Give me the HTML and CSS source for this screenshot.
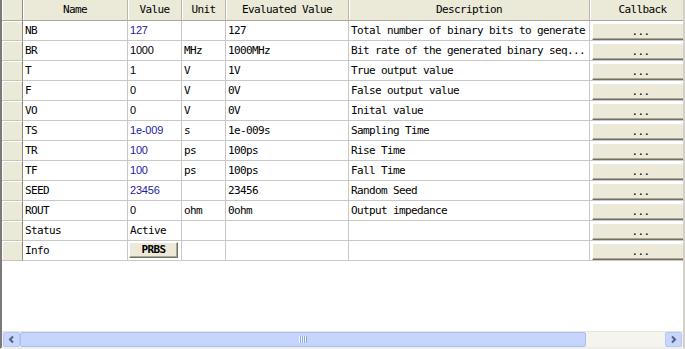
FILE: index.html
```html
<!DOCTYPE html>
<html lang="en">
  <head>
    <meta charset="UTF-8" />
    <title>Parameters</title>
    <link rel="stylesheet" href="styles.css">
  </head>
  <body>
    <div class="frame">
      <div class="viewport">
        <div class="sheet">
          <div class="row head">
            <div class="hcell corner"></div>
            <div class="hcell">Name</div>
            <div class="hcell">Value</div>
            <div class="hcell">Unit</div>
            <div class="hcell">Evaluated Value</div>
            <div class="hcell">Description</div>
            <div class="hcell">Callback</div>
          </div>

          <div class="row">
            <div class="rh"></div>
            <div class="cell">NB</div>
            <div class="cell num blue">127</div>
            <div class="cell"></div>
            <div class="cell">127</div>
            <div class="cell">Total number of binary bits to generate</div>
            <div class="cell cb"><button class="dots">...</button></div>
          </div>
          <div class="row">
            <div class="rh"></div>
            <div class="cell">BR</div>
            <div class="cell num">1000</div>
            <div class="cell">MHz</div>
            <div class="cell">1000MHz</div>
            <div class="cell">Bit rate of the generated binary seq...</div>
            <div class="cell cb"><button class="dots">...</button></div>
          </div>
          <div class="row">
            <div class="rh"></div>
            <div class="cell">T</div>
            <div class="cell num">1</div>
            <div class="cell">V</div>
            <div class="cell">1V</div>
            <div class="cell">True output value</div>
            <div class="cell cb"><button class="dots">...</button></div>
          </div>
          <div class="row">
            <div class="rh"></div>
            <div class="cell">F</div>
            <div class="cell num">0</div>
            <div class="cell">V</div>
            <div class="cell">0V</div>
            <div class="cell">False output value</div>
            <div class="cell cb"><button class="dots">...</button></div>
          </div>
          <div class="row">
            <div class="rh"></div>
            <div class="cell">VO</div>
            <div class="cell num">0</div>
            <div class="cell">V</div>
            <div class="cell">0V</div>
            <div class="cell">Inital value</div>
            <div class="cell cb"><button class="dots">...</button></div>
          </div>
          <div class="row">
            <div class="rh"></div>
            <div class="cell">TS</div>
            <div class="cell num blue">1e-009</div>
            <div class="cell">s</div>
            <div class="cell">1e-009s</div>
            <div class="cell">Sampling Time</div>
            <div class="cell cb"><button class="dots">...</button></div>
          </div>
          <div class="row">
            <div class="rh"></div>
            <div class="cell">TR</div>
            <div class="cell num blue">100</div>
            <div class="cell">ps</div>
            <div class="cell">100ps</div>
            <div class="cell">Rise Time</div>
            <div class="cell cb"><button class="dots">...</button></div>
          </div>
          <div class="row">
            <div class="rh"></div>
            <div class="cell">TF</div>
            <div class="cell num blue">100</div>
            <div class="cell">ps</div>
            <div class="cell">100ps</div>
            <div class="cell">Fall Time</div>
            <div class="cell cb"><button class="dots">...</button></div>
          </div>
          <div class="row">
            <div class="rh"></div>
            <div class="cell">SEED</div>
            <div class="cell num blue">23456</div>
            <div class="cell"></div>
            <div class="cell">23456</div>
            <div class="cell">Random Seed</div>
            <div class="cell cb"><button class="dots">...</button></div>
          </div>
          <div class="row">
            <div class="rh"></div>
            <div class="cell">ROUT</div>
            <div class="cell num">0</div>
            <div class="cell">ohm</div>
            <div class="cell">0ohm</div>
            <div class="cell">Output impedance</div>
            <div class="cell cb"><button class="dots">...</button></div>
          </div>
          <div class="row">
            <div class="rh"></div>
            <div class="cell">Status</div>
            <div class="cell">Active</div>
            <div class="cell"></div>
            <div class="cell"></div>
            <div class="cell"></div>
            <div class="cell cb"><button class="dots">...</button></div>
          </div>
          <div class="row">
            <div class="rh"></div>
            <div class="cell">Info</div>
            <div class="cell"><button class="prbs">PRBS</button></div>
            <div class="cell"></div>
            <div class="cell"></div>
            <div class="cell"></div>
            <div class="cell cb"><button class="dots">...</button></div>
          </div>
        </div>
      </div>

      <div class="hscroll">
        <div class="arrow">
          <svg width="9" height="9" viewBox="0 0 9 9"><path d="M6 1.5 L3 4.5 L6 7.5" fill="none" stroke="#4d6185" stroke-width="2"/></svg>
        </div>
        <div class="thumb"><span class="grip"></span></div>
        <div class="track"></div>
        <div class="arrow">
          <svg width="9" height="9" viewBox="0 0 9 9"><path d="M3 1.5 L6 4.5 L3 7.5" fill="none" stroke="#4d6185" stroke-width="2"/></svg>
        </div>
      </div>
    </div>
  </body>
</html>
```

FILE: styles.css
```css
/* Page and outer frame */
body {
  margin: 0;
  background: #ffffff;
  font-family: "DejaVu Sans Mono", "Liberation Mono", monospace;
  font-size: 11px;
  letter-spacing: -0.62px;
  color: #000000;
}

.frame {
  width: 685px;
  height: 349px;
  box-sizing: border-box;
  border-left: 2px solid #7a7a7a;
  border-right: 2px solid #d4d0c8;
  border-bottom: 2px solid #f0efe8;
  display: flex;
  flex-direction: column;
  overflow: hidden;
}

.viewport {
  flex: 1;
  overflow: hidden;
  background: #ffffff;
}

/* Table grid */
.sheet {
  width: 694px;
}

.row {
  display: grid;
  grid-template-columns: 21px 105px 54px 44px 123px 241px 106px;
  height: 20px;
}

.row.head {
  height: 21px;
}

.hcell {
  box-sizing: border-box;
  background: #ebe9d8;
  border-right: 1px solid #b9b6a6;
  border-bottom: 1px solid #aca899;
  box-shadow: inset 1px 0 #ffffff;
  text-align: center;
  line-height: 19px;
  white-space: nowrap;
  overflow: hidden;
}

.hcell.corner {
  border-right-color: #8f8c7e;
}

.rh {
  box-sizing: border-box;
  background: #ebe9d8;
  border-right: 1px solid #8f8c7e;
  border-bottom: 1px solid #c9c6b6;
  box-shadow: inset 1px 1px #ffffff;
}

.cell {
  box-sizing: border-box;
  border-right: 1px solid #c8c8c8;
  border-bottom: 1px solid #c8c8c8;
  padding-left: 2px;
  line-height: 19px;
  white-space: nowrap;
  overflow: hidden;
}

.num {
  font-family: "Liberation Sans", Arial, sans-serif;
  letter-spacing: -0.2px;
}

.blue {
  color: #1a1aa0;
}

/* Buttons inside cells */
.cb {
  padding: 2px 0 0 2px;
}

.dots,
.prbs {
  display: block;
  box-sizing: border-box;
  margin: 0;
  padding: 0;
  background: #ece9d8;
  border: none;
  border-top: 1px solid #ffffff;
  border-left: 1px solid #ffffff;
  border-right: 1px solid #716f64;
  border-bottom: 1px solid #716f64;
  box-shadow: inset -1px -1px #aca899;
  font-family: "DejaVu Sans Mono", "Liberation Mono", monospace;
  font-size: 11px;
  letter-spacing: -0.62px;
  color: #000000;
  line-height: 14px;
}

.dots {
  width: 97px;
  height: 17px;
}

.prbs {
  width: 49px;
  height: 16px;
  margin-top: 1px;
  margin-left: -1px;
  font-weight: bold;
}

/* Horizontal scrollbar */
.hscroll {
  height: 16px;
  display: flex;
  padding: 0 1px;
  background: #f5f4ef;
  border-top: 1px solid #e8e6dc;
  box-sizing: border-box;
}

.arrow {
  width: 17px;
  box-sizing: border-box;
  background: #c8d6fb;
  border: 1px solid #b4c8f6;
  border-radius: 2px;
  display: flex;
  justify-content: center;
  align-items: center;
}

.thumb {
  width: 566px;
  box-sizing: border-box;
  background: #c6d5fc;
  border: 1px solid #a9bff1;
  border-radius: 2px;
  display: flex;
  justify-content: center;
  align-items: center;
}

.grip {
  width: 8px;
  height: 7px;
  background: repeating-linear-gradient(90deg, #eef3fe 0 1px, #8da7e0 1px 2px);
}

.track {
  flex: 1;
}
```
